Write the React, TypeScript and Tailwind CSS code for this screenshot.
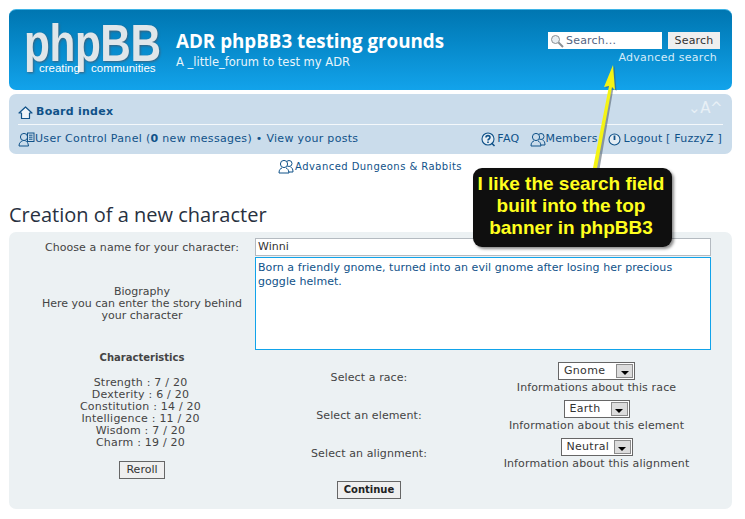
const verdana = "font-['DejaVu_Sans',sans-serif]";

function HomeIcon() {
  return (
    <svg width="15" height="14" viewBox="0 0 15 14" fill="#eef4f9" stroke="#105289" strokeWidth="1.2" className="shrink-0">
      <path d="M7.5 1 L14 7 H11.5 V12.5 H3.5 V7 H1 Z" strokeLinejoin="round" />
    </svg>
  );
}

function UcpIcon() {
  return (
    <svg width="17" height="15" viewBox="0 0 17 15" fill="none" stroke="#105289" strokeWidth="1" className="shrink-0">
      <circle cx="6" cy="5" r="3.6" />
      <path d="M1 14 C1 10.5 3 9.5 4.5 9 M7.5 9 C9 9.5 10 10.5 10.5 14 H1" />
      <rect x="9.5" y="1" width="6.5" height="8.5" fill="#cadceb" />
      <path d="M11 3.2 H14.5 M11 5.2 H14.5 M11 7.2 H14.5" />
    </svg>
  );
}

function MembersIcon({ bg = "#cadceb" }: { bg?: string }) {
  return (
    <svg width="16" height="15" viewBox="0 0 16 15" fill="none" stroke="#105289" strokeWidth="1" className="shrink-0">
      <circle cx="11" cy="4.5" r="3" />
      <path d="M8 13 H15 C15 10 14 8.5 12.5 8" />
      <circle cx="6" cy="5" r="3.6" fill={bg} />
      <path d="M1 14 C1 10.5 2.5 9.5 4 9 M8 9 C9.5 9.5 10.5 10.5 11 14 H1" fill={bg} />
    </svg>
  );
}

function FaqIcon() {
  return (
    <svg width="15" height="15" viewBox="0 0 15 15" fill="#e4edf4" stroke="#105289" className="shrink-0">
      <circle cx="7" cy="7" r="6" strokeWidth="1.1" />
      <path d="M10.5 11 L13.5 14" strokeWidth="1.6" />
      <path d="M5 5.5 C5 3 9 3 9 5.5 C9 7 7 7 7 8.5" strokeWidth="1.6" fill="none" />
      <path d="M7 9.6 V11" strokeWidth="1.6" />
    </svg>
  );
}

function PowerIcon() {
  return (
    <svg width="13" height="13" viewBox="0 0 13 13" fill="#e4edf4" stroke="#105289" className="shrink-0">
      <circle cx="6.5" cy="6.5" r="5.5" strokeWidth="1.1" />
      <path d="M6.5 2.5 V7" strokeWidth="1.8" />
    </svg>
  );
}

function SelectBox({ label, width }: { label: string; width: string }) {
  return (
    <div className={`${width} mx-auto h-[18px] flex items-center justify-between border border-[#666] bg-white pl-[5px] pr-[1px] text-[11px] tracking-[0.3px] text-[#333]`}>
      <span>{label}</span>
      <span className="w-[17px] h-[14px] border border-[#8a8a8a] bg-[#dcdcdc] flex items-center justify-center">
        <span className="mt-[3px] border-x-[4px] border-t-[4px] border-x-transparent border-t-black" />
      </span>
    </div>
  );
}

function SelectCell({ label, width, info }: { label: string; width: string; info: string }) {
  return (
    <div className="h-[38px] text-center pr-[1px]">
      <SelectBox label={label} width={width} />
      <div className="mt-px leading-[14px] tracking-[0.13px]">{info}</div>
    </div>
  );
}

function SelectLabel({ text }: { text: string }) {
  return <div className="h-[38px] pt-[9px] text-center leading-[14px] tracking-[0.1px]">{text}</div>;
}

export default function App() {
  return (
    <div className={`${verdana} relative w-[745px] h-[519px] overflow-hidden bg-white px-[9px] pt-[9px] text-[11px] text-[#444]`}>
      {/* Banner */}
      <header className="h-[81px] w-[723px] rounded-[7px] border-t border-[#3fb4e6] bg-gradient-to-b from-[#0076b1] to-[#12a3eb] flex">
        <div className="relative w-[167px] h-full shrink-0">
          <span className="absolute left-[15px] top-[16px] origin-left scale-x-[0.83] font-['Liberation_Sans',sans-serif] text-[51px] font-bold leading-[36px] tracking-[-0.5px] text-[#dfe6ea] [filter:drop-shadow(1px_1px_1px_#3d5f78)]">
            phpBB
          </span>
          <span className="absolute left-[30px] top-[52px] font-['Liberation_Sans',sans-serif] text-[11.5px] leading-[12px] text-white">
            creating
          </span>
          <span className="absolute left-[82px] top-[52px] font-['Liberation_Sans',sans-serif] text-[11.5px] leading-[12px] text-white">
            communities
          </span>
        </div>
        <div className="pt-[18px] w-[372px] shrink-0 text-white">
          <h1 className="font-['Open_Sans',sans-serif] text-[18.8px] font-bold leading-[26px]">ADR phpBB3 testing grounds</h1>
          <p className="text-[11.5px] leading-[16px] text-[#e8f4fb]">A _little_forum to test my ADR</p>
        </div>
        <div className="pt-[22px] pr-[12px] flex-1">
          <div className="flex gap-[6px]">
            <div className="w-[114px] h-[17px] bg-white flex items-center gap-[2px] pl-[2px] pt-px tracking-[0.2px] text-[#536482]">
              <svg width="14" height="14" viewBox="0 0 14 14" fill="#e8eef2" stroke="#8a8f94" className="shrink-0">
                <circle cx="5.5" cy="5.5" r="4" />
                <path d="M8.5 8.5 L13 13" strokeWidth="2" />
              </svg>
              Search...
            </div>
            <div className="w-[52px] h-[17px] bg-[#efefef] flex items-center justify-center pt-px tracking-[0.2px] text-[#333]">Search</div>
          </div>
          <div className="text-right pr-[3px] mt-[2px] tracking-[0.28px] text-[#d4ecf9] leading-[14px]">Advanced search</div>
        </div>
      </header>

      {/* Nav panel */}
      <nav className="mt-[4px] h-[60px] w-[723px] rounded-[7px] bg-[#cadceb] px-[9px]">
        <div className="h-[31px] flex items-center justify-between border-b border-[#f4f8fb] pt-[7px]">
          <div className="flex items-center gap-[3px] font-bold tracking-[0.25px] text-[#105289]">
            <HomeIcon />
            Board index
          </div>
          <div className="text-[#e8f0f6] text-[15px] pb-[8px] tracking-[-0.5px] pr-[1px]">⌄A^</div>
        </div>
        <div className="h-[28px] flex items-center justify-between tracking-[0.31px] text-[#105289]">
          <div className="flex items-center">
            <UcpIcon />
            <span>
              User Control Panel (<b>0</b> new messages) • View your posts
            </span>
          </div>
          <div className="flex items-center gap-[10px] pr-px">
            <span className="flex items-center">
              <FaqIcon />
              <span className="ml-px">FAQ</span>
            </span>
            <span className="flex items-center tracking-[0.15px]">
              <MembersIcon />
              <span>Members</span>
            </span>
            <span className="flex items-center gap-[3px] tracking-[0.2px]">
              <PowerIcon />
              Logout [ FuzzyZ ]
            </span>
          </div>
        </div>
      </nav>

      <div className="mt-[4px] h-[17px] flex items-center justify-center gap-px text-[#105289] text-[10px] tracking-[0.45px] pr-[5px]">
        <MembersIcon bg="#ffffff" />
        Advanced Dungeons &amp; Rabbits
      </div>

      <h2 className="mt-[28px] h-[23px] font-['Open_Sans',sans-serif] text-[20px] leading-[23px] text-[#28313f]">Creation of a new character</h2>

      {/* Form */}
      <main className="mt-[6px] h-[277px] w-[723px] rounded-[7px] bg-[#ecf1f3] pl-[20px] pr-[21px] pt-[6px]">
        <div className="grid grid-cols-[226px_1fr] gap-y-px">
          <div className="h-[18px] pt-[2px] flex items-center justify-center tracking-[0.06px]">Choose a name for your character:</div>
          <div className="h-[18px] border border-[#b4bac0] bg-white px-[2px] pt-px flex items-center text-[#333]">Winni</div>
          <div className="h-[93px] flex items-center justify-center text-center leading-[12px] px-[5px]">
            <div>
              Biography
              <br />
              Here you can enter the story behind your character
            </div>
          </div>
          <div className="h-[93px] border border-[#11a3ea] bg-white px-[2px] pt-[3px] leading-[14px] tracking-[0.06px] text-[#105289]">
            Born a friendly gnome, turned into an evil gnome after losing her precious goggle helmet.
          </div>
        </div>

        <div className="grid grid-cols-[226px_228px_228px]">
          <div className="text-center pt-px">
            <div className="font-bold text-[10px] leading-[14px]">Characteristics</div>
            <div className="mt-[12px] pr-[3px] leading-[12px] tracking-[0.22px]">
              <div>Strength : 7 / 20</div>
              <div>Dexterity : 6 / 20</div>
              <div>Constitution : 14 / 20</div>
              <div>Intelligence : 11 / 20</div>
              <div>Wisdom : 7 / 20</div>
              <div>Charm : 19 / 20</div>
            </div>
            <button className="mt-[12px] h-[18px] w-[46px] border border-[#666] bg-[#efefef] text-[#333] leading-[14px]">Reroll</button>
          </div>
          <div className="col-span-2 pt-[12px]">
            <div className="grid grid-cols-2">
              <SelectLabel text="Select a race:" />
              <SelectCell label="Gnome" width="w-[77px]" info="Informations about this race" />
              <SelectLabel text="Select an element:" />
              <SelectCell label="Earth" width="w-[66px]" info="Information about this element" />
              <SelectLabel text="Select an alignment:" />
              <SelectCell label="Neutral" width="w-[72px]" info="Information about this alignment" />
            </div>
            <div className="w-[228px] text-center mt-[5px]">
              <button className="h-[18px] w-[64px] border border-[#666] bg-[#efefef] text-[10px] font-bold text-[#222] leading-[14px]">Continue</button>
            </div>
          </div>
        </div>
      </main>

      {/* Annotation laid over the page */}
      <svg className="absolute left-[585px] top-[60px]" width="40" height="112" viewBox="0 0 40 112" fill="none">
        <path d="M28 5 L30 30 L27 27 L13 108 L9 108 L24 26 L19 27 Z" fill="#4a5a66" opacity="0.55" transform="translate(1.5 1)" />
        <path d="M28 5 L30 30 L27 27 L12 108 L8 108 L24 26 L19 27 Z" fill="#f4f414" />
      </svg>
      <div className="absolute left-[473px] top-[168px] w-[199px] h-[79px] rounded-[9px] bg-[#0f0f0f] shadow-[2px_2px_3px_rgba(0,0,0,0.45)] flex items-center justify-center pb-[3px] pr-[3px] text-center font-['Liberation_Sans',sans-serif] text-[19px] font-bold leading-[22px] text-[#ffff1e]">
        <div>
          I like the search field
          <br />
          built into the top
          <br />
          banner in phpBB3
        </div>
      </div>
    </div>
  );
}
